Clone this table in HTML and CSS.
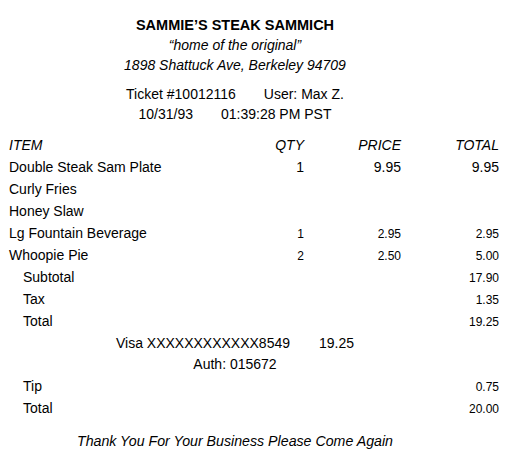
FILE: index.html
```html
<!DOCTYPE html>
<html>
<head>
<meta charset="utf-8">
<link rel="stylesheet" href="styles.css">
</head>
<body>
<div class="receipt">
  <header class="head">
    <div class="title">SAMMIE’S STEAK SAMMICH</div>
    <div class="tag">“home of the original”</div>
    <div class="addr">1898 Shattuck Ave, Berkeley 94709</div>
    <div class="meta first"><span>Ticket #10012116</span><span>User: Max Z.</span></div>
    <div class="meta"><span>10/31/93</span><span>01:39:28 PM PST</span></div>
  </header>

  <div class="table">
    <div class="row hdr"><span>ITEM</span><span class="n">QTY</span><span class="n">PRICE</span><span class="n">TOTAL</span></div>
    <div class="row"><span>Double Steak Sam Plate</span><span class="n">1</span><span class="n">9.95</span><span class="n">9.95</span></div>
    <div class="row"><span>Curly Fries</span><span></span><span></span><span></span></div>
    <div class="row"><span>Honey Slaw</span><span></span><span></span><span></span></div>
    <div class="row"><span>Lg Fountain Beverage</span><span class="n s">1</span><span class="n s">2.95</span><span class="n s">2.95</span></div>
    <div class="row"><span>Whoopie Pie</span><span class="n s">2</span><span class="n s">2.50</span><span class="n s">5.00</span></div>
    <div class="row sum"><span>Subtotal</span><span class="n s">17.90</span></div>
    <div class="row sum"><span>Tax</span><span class="n s">1.35</span></div>
    <div class="row sum"><span>Total</span><span class="n s">19.25</span></div>
  </div>

  <div class="pay">
    <div class="meta visa"><span>Visa XXXXXXXXXXXX8549</span><span>19.25</span></div>
    <div class="auth">Auth: 015672</div>
  </div>

  <div class="table">
    <div class="row sum"><span>Tip</span><span class="n s">0.75</span></div>
    <div class="row sum"><span>Total</span><span class="n s">20.00</span></div>
  </div>

  <div class="thanks">Thank You For Your Business Please Come Again</div>
</div>
</body>
</html>
```

FILE: styles.css
```css
html, body {
  margin: 0;
  padding: 0;
  background: #ffffff;
}

body {
  font-family: "Liberation Sans", Arial, sans-serif;
  font-size: 14px;
  color: #000000;
}

.receipt {
  padding: 15px 9px 0 9px;
}

.head {
  margin-right: 38px;
  text-align: center;
}

.title {
  font-weight: bold;
  line-height: 20px;
  font-size: 14.5px;
}

.tag,
.addr {
  font-style: italic;
  line-height: 20px;
}

.meta {
  display: flex;
  justify-content: center;
  gap: 28px;
  line-height: 20px;
}

.meta.first {
  margin-top: 9px;
}

.table {
  display: flex;
  flex-direction: column;
}

.head + .table {
  margin-top: 10px;
}

.row {
  display: grid;
  grid-template-columns: 1fr 60px 97px 98px;
  align-items: baseline;
  height: 22px;
  line-height: 22px;
}

.row.hdr {
  font-style: italic;
}

.row .n {
  text-align: right;
}

.row .s {
  font-size: 12px;
}

.row.sum {
  grid-template-columns: 1fr 100px;
  padding-left: 14px;
}

.pay {
  margin-right: 38px;
  text-align: center;
}

.visa {
  line-height: 22px;
  gap: 29px;
}

.auth {
  line-height: 21px;
}

.thanks {
  margin-top: 11px;
  margin-right: 38px;
  text-align: center;
  font-style: italic;
  font-size: 14.2px;
  line-height: 22px;
}
```
